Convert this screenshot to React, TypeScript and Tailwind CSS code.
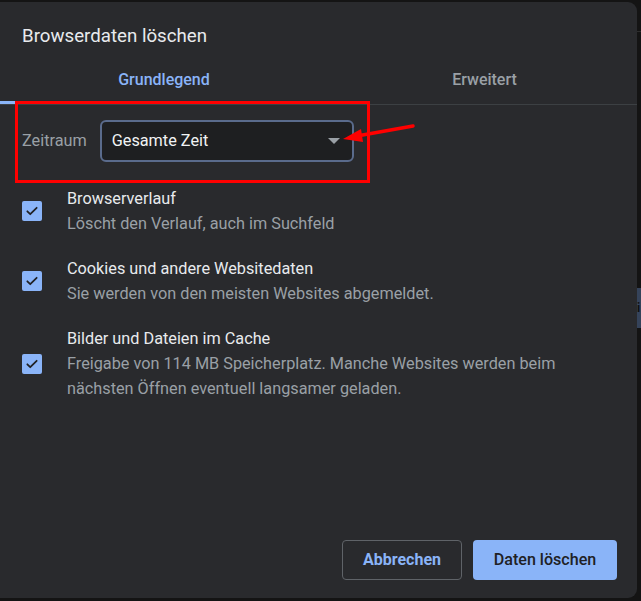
import React from "react";

function Check() {
  return (
    <div className="w-[20px] h-[20px] rounded-[2px] bg-[#8ab4f8] flex items-center justify-center shrink-0">
      <svg width="14" height="14" viewBox="0 0 24 24" fill="none">
        <path d="M4 12.5l5 5L20 6.5" stroke="#202124" strokeWidth="3" strokeLinecap="round" strokeLinejoin="round" />
      </svg>
    </div>
  );
}

function Item({ title, desc }: { title: string; desc: React.ReactNode }) {
  return (
    <div className="flex items-center pl-[22px]">
      <Check />
      <div className="ml-[25px] flex flex-col">
        <div className="text-[16.25px] leading-[25px] text-[#e8eaed]">{title}</div>
        <div className="text-[16.25px] leading-[25px] text-[#9aa0a6]">{desc}</div>
      </div>
    </div>
  );
}

export default function App() {
  return (
    <div
      className="w-[641px] h-[601px] bg-[#141414] flex relative overflow-hidden"
      style={{ fontFamily: "Roboto, 'Liberation Sans', sans-serif" }}
    >
      <div className="mt-[2px] w-[637px] h-[596px] bg-[#292a2d] rounded-r-[9px] flex flex-col relative">
        <div className="pl-[22px] pt-[22px] text-[18.7px] leading-[24px] text-[#e8eaed]">Browserdaten löschen</div>
        <div className="mt-[8px] flex border-b border-[#3c4043]">
          <div className="w-[328px] h-[48px] flex items-center justify-center text-[16px] font-medium text-[#8ab4f8] relative">
            Grundlegend
            <div className="absolute left-0 right-0 bottom-0 h-[3px] bg-[#8ab4f8]" />
          </div>
          <div className="flex-1 h-[48px] pl-[4px] flex items-center justify-center text-[16px] font-medium text-[#9aa0a6]">
            Erweitert
          </div>
        </div>
        <div className="flex items-center pl-[22px] mt-[15px]">
          <span className="text-[16.25px] text-[#9aa0a6]">Zeitraum</span>
          <div className="ml-[13px] w-[254px] h-[42px] rounded-[6px] border-2 border-[#5a6b8c] bg-[#1e1f21] flex items-center pl-[10px] pr-[12px]">
            <span className="text-[16.25px] text-[#f1f3f4] flex-1">Gesamte Zeit</span>
            <svg width="12" height="6" viewBox="0 0 12 6">
              <path d="M0 0h12L6 6z" fill="#9aa0a6" />
            </svg>
          </div>
        </div>
        <div className="mt-[24px] flex flex-col gap-[20px]">
          <Item title="Browserverlauf" desc="Löscht den Verlauf, auch im Suchfeld" />
          <Item title="Cookies und andere Websitedaten" desc="Sie werden von den meisten Websites abgemeldet." />
          <Item
            title="Bilder und Dateien im Cache"
            desc={
              <>
                Freigabe von 114 MB Speicherplatz. Manche Websites werden beim
                <br />
                nächsten Öffnen eventuell langsamer geladen.
              </>
            }
          />
        </div>
        <div className="mt-auto mb-[18px] mr-[20px] flex justify-end gap-[11px]">
          <button className="w-[120px] h-[40px] rounded-[4px] border border-[#5f6368] text-[16px] font-bold text-[#8ab4f8]">
            Abbrechen
          </button>
          <button className="w-[144px] h-[40px] rounded-[4px] bg-[#8ab4f8] text-[16.1px] font-medium text-[#202124]">
            Daten löschen
          </button>
        </div>
      </div>
      <div className="flex-1 flex flex-col">
        <div className="mt-[31px] h-[1px] bg-[#2e2e2e]" />
        <div className="mt-[256px] h-[40px] bg-[#35435a] flex items-center">
          <span className="text-[12px] text-[#111] font-bold leading-none">i</span>
        </div>
      </div>
      {/* annotation overlay */}
      <div className="absolute left-[15px] top-[101px] w-[355px] h-[82px] border-[3px] border-[#ff0000]" />
      <svg className="absolute left-[335px] top-[118px]" width="85" height="30" viewBox="0 0 85 30">
        <path d="M78 8 L22 18" stroke="#ff0000" strokeWidth="3.5" strokeLinecap="round" />
        <path d="M8 21 L26 11 L28 24 Z" fill="#ff0000" />
      </svg>
    </div>
  );
}
